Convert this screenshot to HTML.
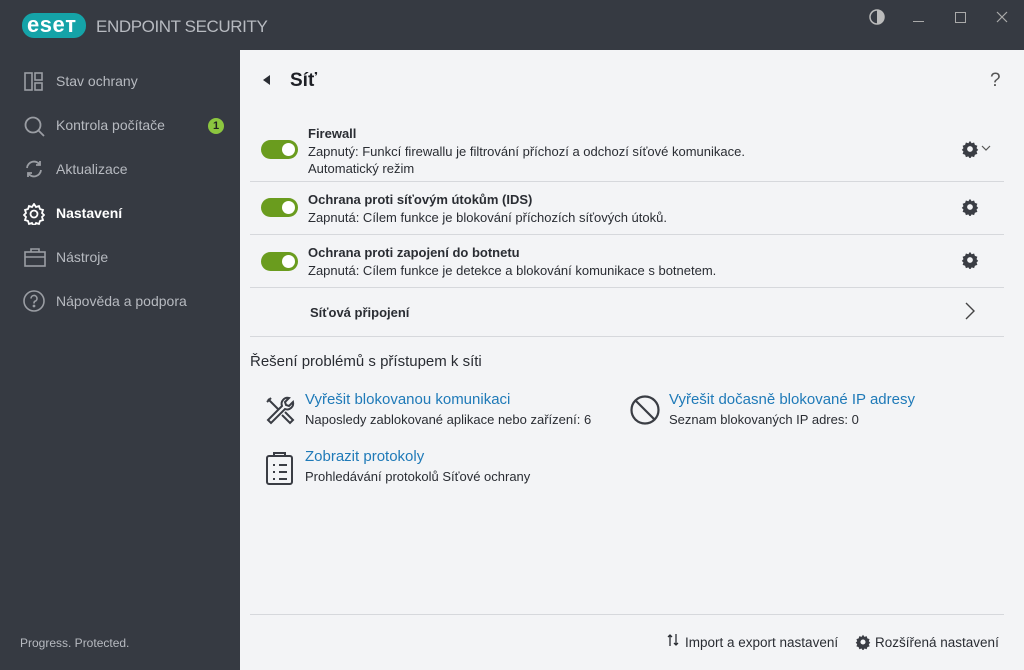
<!DOCTYPE html>
<html><head><meta charset="utf-8"><style>
*{margin:0;padding:0;box-sizing:border-box}
body{width:1024px;height:670px;background:#363a42;font-family:"Liberation Sans",sans-serif;position:relative;overflow:hidden;color:#2a2d33}
.a{position:absolute}
.nav{position:absolute;left:56px;font-size:14px;color:#b7bac0}
.main{position:absolute;left:240px;top:50px;width:784px;height:620px;background:#f3f4f6}
.t{font-size:13px;font-weight:bold;color:#2a2d33}
.d{font-size:13px;color:#2a2d33}
.sep{position:absolute;left:10px;width:754px;height:1px;background:#d6d8dc}
.tg{position:absolute;left:21px;width:37px;height:19px;border-radius:10px;background:#6a9c1e}
.tg:after{content:"";position:absolute;right:3px;top:3px;width:13px;height:13px;border-radius:50%;background:#fff}
.lk{font-size:15px;color:#1f7ab8}
</style></head><body>
<div class="a" style="left:22px;top:13px;width:64px;height:25px;border-radius:12px;background:#15a3a8"></div>
<div class="a" style="left:27px;top:12px;font-size:22px;font-weight:bold;color:#fff;letter-spacing:0.5px">eseт</div>
<div class="a" style="left:96px;top:17px;font-size:17px;color:#b7bac0;letter-spacing:-0.4px">ENDPOINT SECURITY</div>
<svg class="a" style="left:868px;top:8px" width="18" height="18"><circle cx="9" cy="9" r="7" fill="none" stroke="#bbb" stroke-width="1.5"/><path d="M9 2a7 7 0 0 1 0 14z" fill="#bbb"/></svg>
<div class="a" style="left:913px;top:21px;width:11px;height:1px;background:#aaa"></div>
<div class="a" style="left:955px;top:12px;width:11px;height:11px;border:1px solid #aaa"></div>
<svg class="a" style="left:996px;top:11px" width="12" height="12"><path d="M1 1L11 11M11 1L1 11" stroke="#aaa" stroke-width="1.2"/></svg>

<svg class="a" style="left:24px;top:72px" width="20" height="20" fill="none" stroke="#9a9da3" stroke-width="1.6"><rect x="1" y="1" width="7" height="17"/><rect x="11" y="1" width="7" height="7"/><rect x="11" y="11" width="7" height="7"/></svg>
<div class="nav" style="top:73px">Stav ochrany</div>
<svg class="a" style="left:24px;top:116px" width="22" height="22" fill="none" stroke="#9a9da3" stroke-width="1.8"><circle cx="9" cy="9" r="7.5"/><path d="M14.5 14.5L20 20"/></svg>
<div class="nav" style="top:117px">Kontrola počítače</div>
<div class="a" style="left:208px;top:118px;width:16px;height:16px;border-radius:50%;background:#8cc63f;font-size:11px;font-weight:bold;text-align:center;line-height:16px;color:#222">1</div>
<svg class="a" style="left:24px;top:159px" width="20" height="20" fill="none" stroke="#9a9da3" stroke-width="1.8"><path d="M3 9a7 7 0 0 1 13-3M17 11a7 7 0 0 1-13 3"/><path d="M16 2v4h-4M4 18v-4h4"/></svg>
<div class="nav" style="top:161px">Aktualizace</div>
<svg class="a" style="left:23px;top:203px" width="22" height="22"><path d="M11 1l2 3 3-1 1 3 3 1-1 3 2 2-2 2 1 3-3 1-1 3-3-1-2 3-2-3-3 1-1-3-3-1 1-3-2-2 2-2-1-3 3-1 1-3 3 1z" fill="none" stroke="#fff" stroke-width="1.8"/><circle cx="11" cy="11" r="3.5" fill="none" stroke="#fff" stroke-width="1.8"/></svg>
<div class="nav" style="top:205px;color:#fff;font-weight:bold">Nastavení</div>
<svg class="a" style="left:24px;top:247px" width="22" height="20" fill="none" stroke="#9a9da3" stroke-width="1.6"><rect x="1" y="5" width="20" height="14"/><path d="M7 5V2h8v3M1 10h20"/></svg>
<div class="nav" style="top:249px">Nástroje</div>
<svg class="a" style="left:23px;top:290px" width="22" height="22" fill="none" stroke="#9a9da3" stroke-width="1.6"><circle cx="11" cy="11" r="10"/><path d="M8 8.5a3 3 0 1 1 4 2.8c-1 .4-1 1-1 2.2"/><circle cx="11" cy="16" r=".6" fill="#9a9da3"/></svg>
<div class="nav" style="top:293px">Nápověda a podpora</div>
<div class="a" style="left:20px;top:636px;font-size:12px;color:#b7bac0">Progress. Protected.</div>

<div class="main">
<svg class="a" style="left:23px;top:25px" width="8" height="10"><path d="M7 0v10L0 5z" fill="#2a2d33"/></svg>
<div class="a" style="left:50px;top:20px;font-size:19px;font-weight:bold;color:#1e2026">Síť</div>
<div class="a" style="left:750px;top:20px;font-size:19px;color:#555">?</div>

<div class="tg" style="top:90px"></div>
<div class="a t" style="left:68px;top:76px">Firewall</div>
<div class="a d" style="left:68px;top:94px">Zapnutý: Funkcí firewallu je filtrování příchozí a odchozí síťové komunikace.</div>
<div class="a d" style="left:68px;top:111px">Automatický režim</div>
<svg class="a" style="left:721px;top:90px" width="18" height="18" viewBox="0 0 22 22"><path d="M11 1l2 3 3-1 1 3 3 1-1 3 2 2-2 2 1 3-3 1-1 3-3-1-2 3-2-3-3 1-1-3-3-1 1-3-2-2 2-2-1-3 3-1 1-3 3 1z" fill="#3a3d44"/><circle cx="11" cy="11" r="3.5" fill="#f3f4f6"/></svg>
<svg class="a" style="left:741px;top:95px" width="10" height="7"><path d="M1 1l4 4 4-4" fill="none" stroke="#555" stroke-width="1.2"/></svg>
<div class="sep" style="top:131px"></div>

<div class="tg" style="top:148px"></div>
<div class="a t" style="left:68px;top:142px">Ochrana proti síťovým útokům (IDS)</div>
<div class="a d" style="left:68px;top:160px">Zapnutá: Cílem funkce je blokování příchozích síťových útoků.</div>
<svg class="a" style="left:721px;top:148px" width="18" height="18" viewBox="0 0 22 22"><path d="M11 1l2 3 3-1 1 3 3 1-1 3 2 2-2 2 1 3-3 1-1 3-3-1-2 3-2-3-3 1-1-3-3-1 1-3-2-2 2-2-1-3 3-1 1-3 3 1z" fill="#3a3d44"/><circle cx="11" cy="11" r="3.5" fill="#f3f4f6"/></svg>
<div class="sep" style="top:184px"></div>

<div class="tg" style="top:202px"></div>
<div class="a t" style="left:68px;top:195px">Ochrana proti zapojení do botnetu</div>
<div class="a d" style="left:68px;top:213px">Zapnutá: Cílem funkce je detekce a blokování komunikace s botnetem.</div>
<svg class="a" style="left:721px;top:201px" width="18" height="18" viewBox="0 0 22 22"><path d="M11 1l2 3 3-1 1 3 3 1-1 3 2 2-2 2 1 3-3 1-1 3-3-1-2 3-2-3-3 1-1-3-3-1 1-3-2-2 2-2-1-3 3-1 1-3 3 1z" fill="#3a3d44"/><circle cx="11" cy="11" r="3.5" fill="#f3f4f6"/></svg>
<div class="sep" style="top:237px"></div>

<div class="a t" style="left:70px;top:255px">Síťová připojení</div>
<svg class="a" style="left:725px;top:252px" width="10" height="18"><path d="M1 1l8 8-8 8" fill="none" stroke="#444" stroke-width="1.4"/></svg>
<div class="sep" style="top:286px"></div>

<div class="a" style="left:10px;top:303px;font-size:15px;color:#2a2d33">Řešení problémů s přístupem k síti</div>

<svg class="a" style="left:24px;top:345px" width="32" height="32" fill="none" stroke="#3a3d44" stroke-width="2"><path d="M4 4l10 10M3 7l4-4M25 3a6 6 0 0 0-7 8L4 25l3 3 14-14a6 6 0 0 0 8-7l-4 4-3-1-1-3z"/><path d="M18 20l8 8 3-3-8-8"/></svg>
<div class="a lk" style="left:65px;top:341px">Vyřešit blokovanou komunikaci</div>
<div class="a d" style="left:65px;top:362px">Naposledy zablokované aplikace nebo zařízení: 6</div>
<svg class="a" style="left:389px;top:344px" width="32" height="32" fill="none" stroke="#3a3d44" stroke-width="2.2"><circle cx="16" cy="16" r="13.5"/><path d="M6.5 6.5l19 19"/></svg>
<div class="a lk" style="left:429px;top:341px">Vyřešit dočasně blokované IP adresy</div>
<div class="a d" style="left:429px;top:362px">Seznam blokovaných IP adres: 0</div>

<svg class="a" style="left:25px;top:402px" width="30" height="34" fill="none" stroke="#3a3d44" stroke-width="2"><rect x="2" y="4" width="25" height="28" rx="2"/><path d="M9 4V1h11v3M8 13h2M14 13h8M8 20h2M14 20h8M8 27h2M14 27h8"/></svg>
<div class="a lk" style="left:65px;top:398px">Zobrazit protokoly</div>
<div class="a d" style="left:65px;top:419px">Prohledávání protokolů Síťové ochrany</div>

<div class="sep" style="top:564px"></div>
<svg class="a" style="left:427px;top:583px" width="12" height="14" fill="none" stroke="#2a2d33" stroke-width="1.3"><path d="M3 13V2M1 4l2-2 2 2M9 1v11M7 10l2 2 2-2"/></svg>
<div class="a" style="left:445px;top:585px;font-size:13.5px;color:#2a2d33">Import a export nastavení</div>
<svg class="a" style="left:615px;top:584px" width="16" height="16" viewBox="0 0 22 22"><path d="M11 1l2 3 3-1 1 3 3 1-1 3 2 2-2 2 1 3-3 1-1 3-3-1-2 3-2-3-3 1-1-3-3-1 1-3-2-2 2-2-1-3 3-1 1-3 3 1z" fill="#3a3d44"/><circle cx="11" cy="11" r="3.5" fill="#f3f4f6"/></svg>
<div class="a" style="left:635px;top:585px;font-size:13.5px;color:#2a2d33">Rozšířená nastavení</div>
</div>
</body></html>
